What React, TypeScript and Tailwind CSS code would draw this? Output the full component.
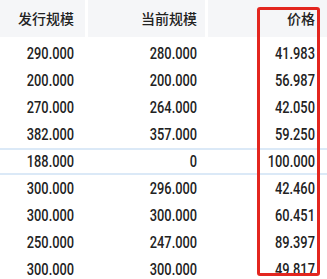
const rows = [
  ["290.000", "280.000", "41.983"],
  ["200.000", "200.000", "56.987"],
  ["270.000", "264.000", "42.050"],
  ["382.000", "357.000", "59.250"],
  ["188.000", "0", "100.000"],
  ["300.000", "296.000", "42.460"],
  ["300.000", "300.000", "60.451"],
  ["250.000", "247.000", "89.397"],
  ["300.000", "300.000", "49.817"],
];

const num = {
  fontFamily: '"Roboto", "Liberation Sans", sans-serif',
};

function Num({ v }: { v: string }) {
  return <span className="inline-block origin-right scale-x-[0.8]">{v}</span>;
}

export default function App() {
  return (
    <div className="relative h-[279px] w-[327px] overflow-hidden bg-white text-[#222]">
      <div
        className="grid h-[37px] grid-cols-[85px_117px_1fr] gap-x-[3px] text-[14px] font-medium"
        style={{ fontFamily: '"Noto Sans CJK SC", "Noto Sans", sans-serif' }}
      >
        <div className="flex items-center justify-end bg-[#f5f6f8] pr-[11px]">发行规模</div>
        <div className="flex items-center justify-end bg-[#f5f6f8] pr-[8px]">当前规模</div>
        <div className="flex items-center justify-end bg-[#f5f6f8] pr-[12px]">价格</div>
      </div>

      <div className="mt-[3px] flex flex-col">
        {rows.map((r, i) => (
          <div
            key={i}
            className={
              i === 4
                ? "grid h-[27px] grid-cols-[85px_117px_1fr] gap-x-[3px] border-y-2 border-[#dbe9f7] text-[16px] font-medium"
                : "grid h-[27px] grid-cols-[85px_117px_1fr] gap-x-[3px] text-[16px] font-medium"
            }
            style={num}
          >
            <div className="flex items-center justify-end pr-[11px]"><Num v={r[0]} /></div>
            <div className="flex items-center justify-end pr-[8px]"><Num v={r[1]} /></div>
            <div className="flex items-center justify-end pr-[12px]"><Num v={r[2]} /></div>
          </div>
        ))}
      </div>

      <div className="pointer-events-none absolute left-[257px] top-[7px] h-[269px] w-[63px] rounded-[3px] border-[3px] border-[#e3261f]" />
    </div>
  );
}
